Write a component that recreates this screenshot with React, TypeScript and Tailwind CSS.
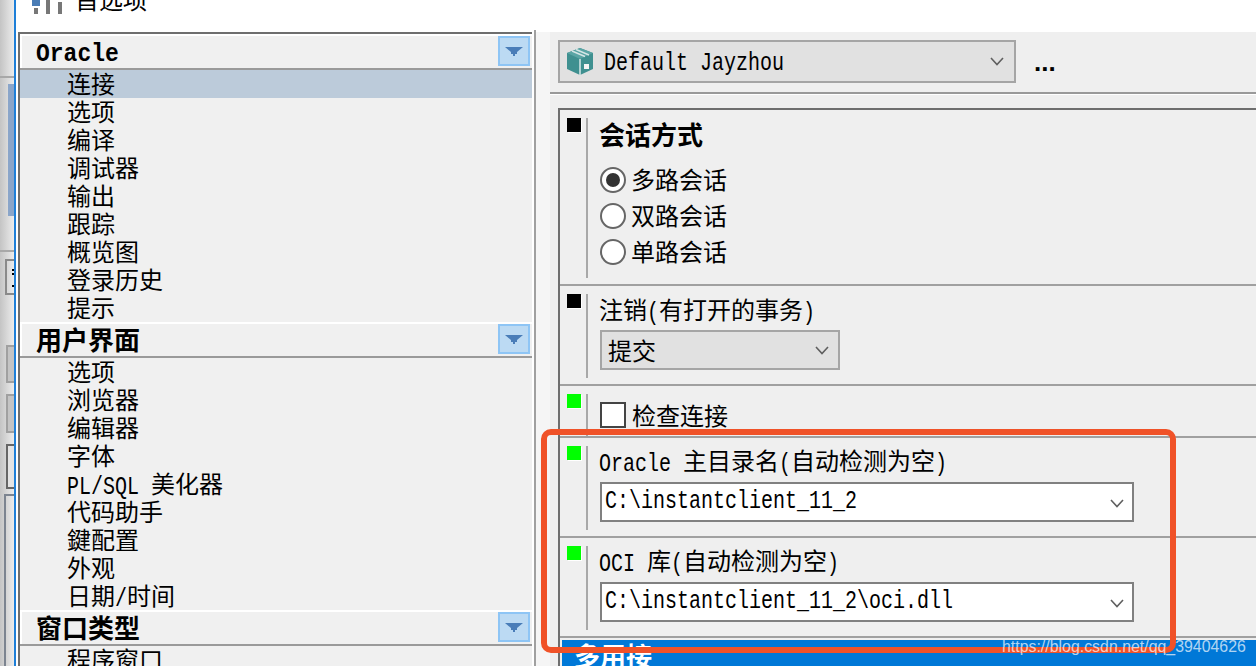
import React from "react";

const cjk = "[font-family:'Noto_Sans_CJK_SC',sans-serif]";
const M = ({ children, bold }: { children: React.ReactNode; bold?: boolean }) => (
  <span className={bold ? "inline-block scale-y-[1.15] [font-family:'Liberation_Mono',monospace] text-[23px] font-bold whitespace-pre" : "inline-block scale-y-125 [font-family:'Liberation_Mono',monospace] text-[20px] whitespace-pre"}>
    {children}
  </span>
);

const Chevron = () => (
  <svg width="14" height="9" viewBox="0 0 14 9" className="shrink-0">
    <path d="M1 1 L7 7.5 L13 1" fill="none" stroke="#5f5f5f" strokeWidth="1.6" />
  </svg>
);

const Arrow = () => (
  <svg width="18" height="9" viewBox="0 0 18 9">
    <path d="M0 0 H18 L12 5 V7 H10 V9 H8 V7 H6 V5 Z" fill="#4a7db8" />
  </svg>
);

const Section = ({ title, items, active }: { title: React.ReactNode; items: React.ReactNode[]; active?: number }) => (
  <div>
    <div className="h-[2px] bg-white" />
    <div className="h-[32px] flex items-start bg-[#f0f0f0] border-l-2 border-white">
      <div className="pl-[14px] h-[32px] flex-1 text-[26px] font-bold text-black leading-[30px] whitespace-nowrap overflow-visible">{title}</div>
      <div className="w-[32px] h-[30px] mr-[2px] bg-[#bcdaf3] border-2 border-[#8ec5f5] flex items-center justify-center">
        <Arrow />
      </div>
    </div>
    <div className="h-[2px] bg-[#9a9a9a]" />
    {items.map((t, i) => (
      <div key={i} className={i === active ? "h-[28px] pl-[47px] leading-[26px] text-[24px] text-black bg-[#bccbda] whitespace-nowrap" : "h-[28px] pl-[47px] leading-[26px] text-[24px] text-black bg-[#f0f0f0] whitespace-nowrap"}>
        {t}
      </div>
    ))}
  </div>
);

const Indicator = ({ green }: { green?: boolean }) => (
  <div className={green ? "w-[14px] h-[14px] shrink-0 bg-[#00ff00] shadow-[1px_1px_0_#ffffff]" : "w-[14px] h-[14px] shrink-0 bg-black shadow-[1px_1px_0_#ffffff]"} />
);

const Row = ({ h, line, green, children }: { h: string; line: string; green?: boolean; children: React.ReactNode }) => (
  <div className={`${h} flex items-start pl-[7px] pt-[8px] border-b-2 border-[#a0a0a0] overflow-hidden`}>
    <Indicator green={green} />
    <div className={`${line} w-[2px] ml-[5px] shrink-0 bg-[#a8a8a8]`} />
    <div className="ml-[11px] flex-1 min-w-0">{children}</div>
  </div>
);

const Radio = ({ checked, label }: { checked?: boolean; label: string }) => (
  <div className="h-[36px] flex items-center text-[24px] text-black">
    <div className="w-[26px] h-[26px] ml-[1px] shrink-0 rounded-full bg-white border-2 border-[#666666] flex items-center justify-center">
      {checked && <div className="w-[14px] h-[14px] rounded-full bg-[#333333]" />}
    </div>
    <span className="ml-[5px] leading-[34px] -mt-[2px]">{label}</span>
  </div>
);

const PathField = ({ label, value }: { label: React.ReactNode; value: string }) => (
  <>
    <div className="h-[28px] mt-[2px] leading-[24px] text-[24px] text-black whitespace-nowrap">{label}</div>
    <div className="mt-[6px] ml-[1px] w-[534px] h-[40px] bg-white border-2 border-[#808080] flex items-center justify-between pl-[3px] pr-[8px]">
      <span><M>{value}</M></span>
      <span className="mt-[3px] flex"><Chevron /></span>
    </div>
  </>
);

export default function App() {
  return (
    <div className={`relative w-[1256px] h-[666px] overflow-hidden bg-white flex text-black ${cjk}`}>
      {/* window behind, at the left edge */}
      <div className="w-[14px] h-[666px] shrink-0 flex flex-col bg-gradient-to-r from-[#c4c4c4] to-[#ececec]">
        <div className="mt-[76px] h-[2px] bg-[#a8a8a8]" />
        <div className="mt-[6px] ml-[8px] h-[132px] bg-[#8aa5c9]" />
        <div className="mt-[34px] h-[2px] bg-[#a8a8a8]" />
        <div className="mt-[7px] ml-[5px] h-[36px] border-2 border-r-0 border-[#8a8a8a] flex flex-col items-end pt-[8px]">
          <div className="w-[2px] h-[2px] bg-black" />
          <div className="mt-[2px] w-[2px] h-[2px] bg-black" />
          <div className="mt-[10px] w-[2px] h-[2px] bg-black" />
        </div>
        <div className="mt-[50px] ml-[6px] h-[38px] border-2 border-r-0 border-[#a0a0a0] bg-[#c4c4c4]" />
        <div className="mt-[11px] ml-[6px] h-[39px] border-2 border-r-0 border-[#a0a0a0] bg-[#c4c4c4]" />
        <div className="mt-[11px] ml-[6px] h-[45px] border-2 border-r-0 border-[#666666] bg-[#e4e4e4]" />
        <div className="mt-[5px] ml-[4px] flex-1 border-2 border-r-0 border-b-0 border-[#7c8490]" />
      </div>
      <div className="w-[2px] h-[666px] shrink-0 bg-[#1e7fd8]" />

      <div className="flex-1 min-w-0 flex flex-col">
        {/* title */}
        <div className="h-[32px] shrink-0 flex items-start overflow-hidden">
          <svg width="30" height="14" viewBox="0 0 30 14" className="ml-[16px] shrink-0">
            <rect x="0" y="0" width="8" height="6" fill="#4a7cb5" />
            <rect x="2" y="8" width="4" height="6" fill="#777777" />
            <rect x="14" y="0" width="4" height="14" fill="#777777" />
            <rect x="26" y="2" width="4" height="12" fill="#777777" />
          </svg>
          <div className="ml-[13px] -mt-[15px] text-[24px] leading-[28px] whitespace-nowrap">首选项</div>
        </div>

        <div className="flex-1 min-h-0 flex">
          {/* left tree */}
          <div className="ml-[2px] w-[514px] shrink-0 border-l-2 border-t-2 border-[#6e6e6e] bg-[#f0f0f0]">
            <Section
              title={<div className="text-[23px] leading-[28px] h-[32px]"><M bold>Oracle</M></div>}
              active={0}
              items={["连接", "选项", "编译", "调试器", "输出", "跟踪", "概览图", "登录历史", "提示"]}
            />
            <Section
              title="用户界面"
              items={[
                "选项",
                "浏览器",
                "编辑器",
                "字体",
                <>
                  <M>PL/SQL </M>美化器
                </>,
                "代码助手",
                "鍵配置",
                "外观",
                <>
                  日期<M>/</M>时间
                </>,
              ]}
            />
            <Section title="窗口类型" items={["程序窗口"]} />
          </div>

          {/* splitter */}
          <div className="w-[2px] shrink-0 bg-white" />
          <div className="w-[2px] shrink-0 -mt-[2px] bg-[#a0a0a0]" />
          <div className="w-[14px] shrink-0 bg-[#f5f5f5]" />

          {/* right pane */}
          <div className="flex-1 min-w-0 bg-[#efefef] flex flex-col">
            <div className="h-[60px] shrink-0 border-b-2 border-[#999999] box-content">
              <div className="flex items-start pt-[8px] pl-[8px]">
                <div className="w-[458px] h-[43px] bg-[#e1e1e1] border-2 border-[#a5a5a5] flex items-center pl-[6px] pr-[10px]">
                  <svg width="28" height="29" viewBox="0 0 28 29" className="shrink-0">
                    <path d="M14 1 L27 6 L27 22 L14 28 L1 22 L1 6 Z" fill="#3f9090" />
                    <path d="M1 6 L14 12 L27 6 L14 1 Z" fill="#5aa5a5" />
                    <path d="M6 4 L19 9.5 M10 2.5 L23 8" stroke="#d4e6e6" strokeWidth="1.4" />
                    <path d="M14 12 V28" stroke="#d8e8e8" strokeWidth="1.5" />
                    <rect x="18" y="17" width="5" height="5" fill="#f4f4f4" />
                  </svg>
                  <span className="ml-[10px] flex-1 mt-[5px]"><M>Default Jayzhou</M></span>
                  <Chevron />
                </div>
                <div className="ml-[18px] mt-[8px] h-[28px] leading-[28px] text-[26px] font-bold [font-family:'Liberation_Sans',sans-serif]">...</div>
              </div>
            </div>
            <div className="h-px shrink-0 bg-white" />

            <div className="mt-[13px] ml-[8px] flex-1 min-h-0 border-l-2 border-t-2 border-[#6e6e6e] overflow-hidden">
              <Row h="h-[176px]" line="h-[160px]">
                <div className="mt-[2px] h-[28px] leading-[28px] text-[26px] font-bold whitespace-nowrap">会话方式</div>
                <div className="mt-[14px]">
                  <Radio checked label="多路会话" />
                  <Radio label="双路会话" />
                  <Radio label="单路会话" />
                </div>
              </Row>
              <Row h="h-[100px]" line="h-[84px]">
                <div className="mt-[2px] h-[28px] leading-[26px] text-[24px] whitespace-nowrap">
                  注销<M>(</M>有打开的事务<M>)</M>
                </div>
                <div className="mt-[6px] ml-[1px] w-[240px] h-[40px] bg-[#e1e1e1] border-2 border-[#a5a5a5] flex items-center justify-between pl-[6px] pr-[9px] text-[24px]">
                  <span className="leading-[34px]">提交</span>
                  <Chevron />
                </div>
              </Row>
              <Row h="h-[52px]" line="h-[42px]" green>
                <div className="mt-[8px] flex items-center h-[26px]">
                  <div className="w-[26px] h-[26px] ml-[1px] shrink-0 bg-white border-2 border-[#444444]" />
                  <span className="ml-[6px] text-[24px] leading-[26px] whitespace-nowrap">检查连接</span>
                </div>
              </Row>
              <Row h="h-[100px]" line="h-[84px]" green>
                <PathField
                  label={
                    <>
                      <M>Oracle </M>主目录名<M>(</M>自动检测为空<M>)</M>
                    </>
                  }
                  value="C:\instantclient_11_2"
                />
              </Row>
              <Row h="h-[100px]" line="h-[84px]" green>
                <PathField
                  label={
                    <>
                      <M>OCI </M>库<M>(</M>自动检测为空<M>)</M>
                    </>
                  }
                  value="C:\instantclient_11_2\oci.dll"
                />
              </Row>
              <div className="mt-[2px] ml-[2px] h-[40px] bg-[#0078d7] pl-[12px] pt-[1px] text-white text-[26px] font-bold leading-[28px] whitespace-nowrap">
                多用接
              </div>
            </div>
          </div>
        </div>
      </div>

      {/* annotation drawn over the screenshot */}
      <div className="absolute left-[541px] top-[429px] w-[635px] h-[224px] border-[6px] border-[#f05228] rounded-[10px]" />
      <div className="absolute left-[1002px] top-[637px] h-[20px] leading-[20px] text-[15.9px] text-white/70 whitespace-nowrap [font-family:'Liberation_Sans',sans-serif]">
        https://blog.csdn.net/qq_39404626
      </div>
    </div>
  );
}
